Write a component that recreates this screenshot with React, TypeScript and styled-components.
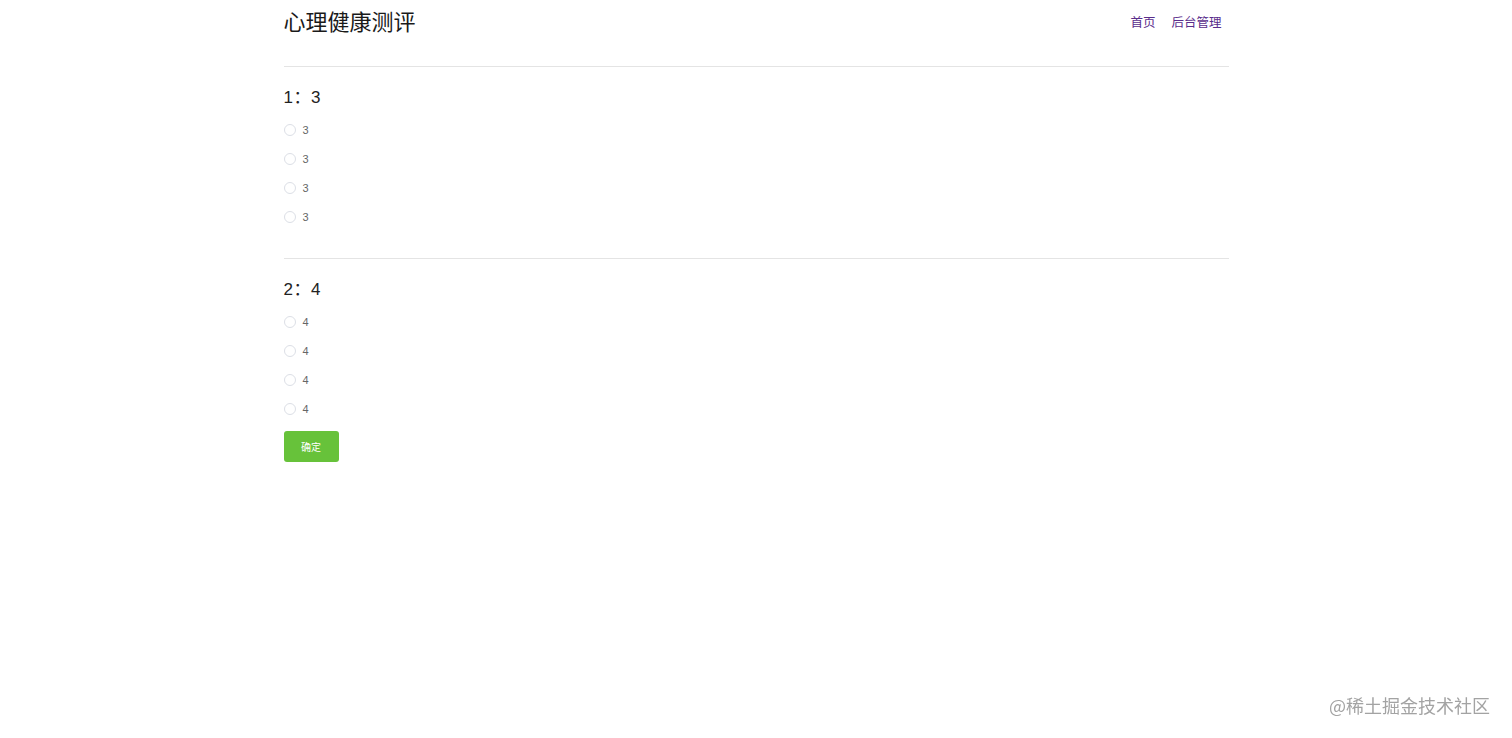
import React from 'react';
import { createGlobalStyle, styled } from 'styled-components';

const GlobalStyle = createGlobalStyle`
  body {
    margin: 0;
    background: #ffffff;
    font-family: "Liberation Sans", "Noto Sans CJK SC", sans-serif;
  }
`;

const Page = styled.div`
  width: 945px;
  margin: 0 auto;
`;

const Header = styled.header`
  display: flex;
  justify-content: space-between;
  align-items: center;
  height: 46px;
  padding-bottom: 20px;
  border-bottom: 1px solid #e4e4e4;
`;

const Title = styled.h1`
  margin: 0;
  font-size: 22px;
  font-weight: 400;
  color: #1a1a1a;
  line-height: 46px;
`;

const Nav = styled.nav`
  display: flex;
  gap: 16px;
  padding: 0 7px 3px 0;
  a {
    font-size: 12.5px;
    color: #5a2d8c;
    text-decoration: none;
  }
`;

const Question = styled.section<{ $last?: boolean }>`
  padding: 20px 0 ${(p) => (p.$last ? '8px' : '27px')};
  border-bottom: ${(p) => (p.$last ? 'none' : '1px solid #e4e4e4')};
`;

const QTitle = styled.h3`
  margin: 0 0 6px;
  font-size: 17px;
  font-weight: 400;
  color: #222;
  line-height: 22px;
  letter-spacing: 0.5px;
`;

const Option = styled.label`
  display: flex;
  align-items: center;
  height: 29px;
  gap: 7px;
  font-size: 11px;
  color: #666;
  cursor: pointer;
`;

const Radio = styled.span`
  width: 10px;
  height: 10px;
  border: 1px solid #dcdfe6;
  border-radius: 50%;
  box-sizing: content-box;
`;

const Button = styled.button`
  width: 55px;
  height: 31px;
  border: none;
  border-radius: 3px;
  background: #67c23a;
  color: #fff;
  font-size: 10px;
  font-family: "Noto Sans CJK SC", sans-serif;
  cursor: pointer;
`;

const Watermark = styled.div`
  position: fixed;
  right: 22px;
  bottom: 20px;
  font-size: 18px;
  color: #a3a3a3;
  font-family: "Noto Sans CJK SC", sans-serif;
`;

const questions = [
  { id: 1, title: '3', options: ['3', '3', '3', '3'] },
  { id: 2, title: '4', options: ['4', '4', '4', '4'] },
];

export default function App() {
  return (
    <>
      <GlobalStyle />
      <Page>
        <Header>
          <Title>心理健康测评</Title>
          <Nav>
            <a href="#">首页</a>
            <a href="#">后台管理</a>
          </Nav>
        </Header>
        {questions.map((q, i) => (
          <Question key={q.id} $last={i === questions.length - 1}>
            <QTitle>
              {q.id}：{q.title}
            </QTitle>
            {q.options.map((o, j) => (
              <Option key={j}>
                <Radio />
                {o}
              </Option>
            ))}
          </Question>
        ))}
        <Button>确定</Button>
      </Page>
      <Watermark>@稀土掘金技术社区</Watermark>
    </>
  );
}
